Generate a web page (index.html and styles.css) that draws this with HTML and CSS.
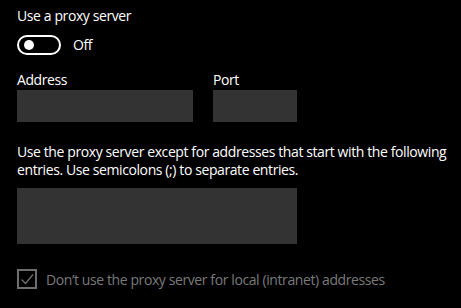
FILE: index.html
```html
<!DOCTYPE html>
<html>
<head>
<meta charset="utf-8">
<link rel="stylesheet" href="styles.css">
</head>
<body>
<div class="page">
  <div class="title">Use a proxy server</div>
  <div class="toggle-row">
    <span class="toggle"><span class="knob"></span></span>
    <span class="toggle-label">Off</span>
  </div>
  <div class="fields">
    <div class="field">
      <div class="label">Address</div>
      <div class="input addr"></div>
    </div>
    <div class="field">
      <div class="label">Port</div>
      <div class="input port"></div>
    </div>
  </div>
  <p class="desc">Use the proxy server except for addresses that start with the following entries. Use semicolons (;) to separate entries.</p>
  <div class="input area"></div>
  <div class="check-row">
    <span class="check"><svg width="20" height="20" viewBox="0 0 20 20"><path d="M4.5 10.5 L8.5 14.5 L16 5.5" fill="none" stroke="#6e6e6e" stroke-width="1.4"/></svg></span>
    <span class="check-label">Don’t use the proxy server for local (intranet) addresses</span>
  </div>
</div>
</body>
</html>
```
FILE: styles.css
```css
html, body { margin: 0; background: #000; }
body { font-family: "Open Sans", "Noto Sans", sans-serif; font-size: 14px; letter-spacing: -0.4px; color: #fff; }
.page { padding: 6px 0 0 17px; }
.title { line-height: 20px; }
.toggle-row { display: flex; align-items: center; margin-top: 9px; height: 20px; }
.toggle { box-sizing: border-box; width: 44px; height: 20px; border: 2px solid #fff; border-radius: 10px; display: flex; align-items: center; padding-left: 5px; }
.knob { width: 10px; height: 10px; border-radius: 50%; background: #fff; }
.toggle-label { margin-left: 12px; line-height: 20px; }
.fields { display: flex; gap: 20px; margin-top: 15px; }
.label { line-height: 20px; }
.input { background: #333; }
.addr { width: 176px; height: 32px; }
.port { width: 84px; height: 32px; }
.desc { margin: 21px 0 0; width: 440px; line-height: 18px; }
.area { width: 280px; height: 56px; margin-top: 9px; }
.check-row { display: flex; align-items: center; margin-top: 25px; }
.check { box-sizing: border-box; width: 20px; height: 20px; border: 2px solid #6e6e6e; display: flex; }
.check svg { margin: -2px; }
.check-label { margin-left: 9px; color: #7a7a7a; }
```
